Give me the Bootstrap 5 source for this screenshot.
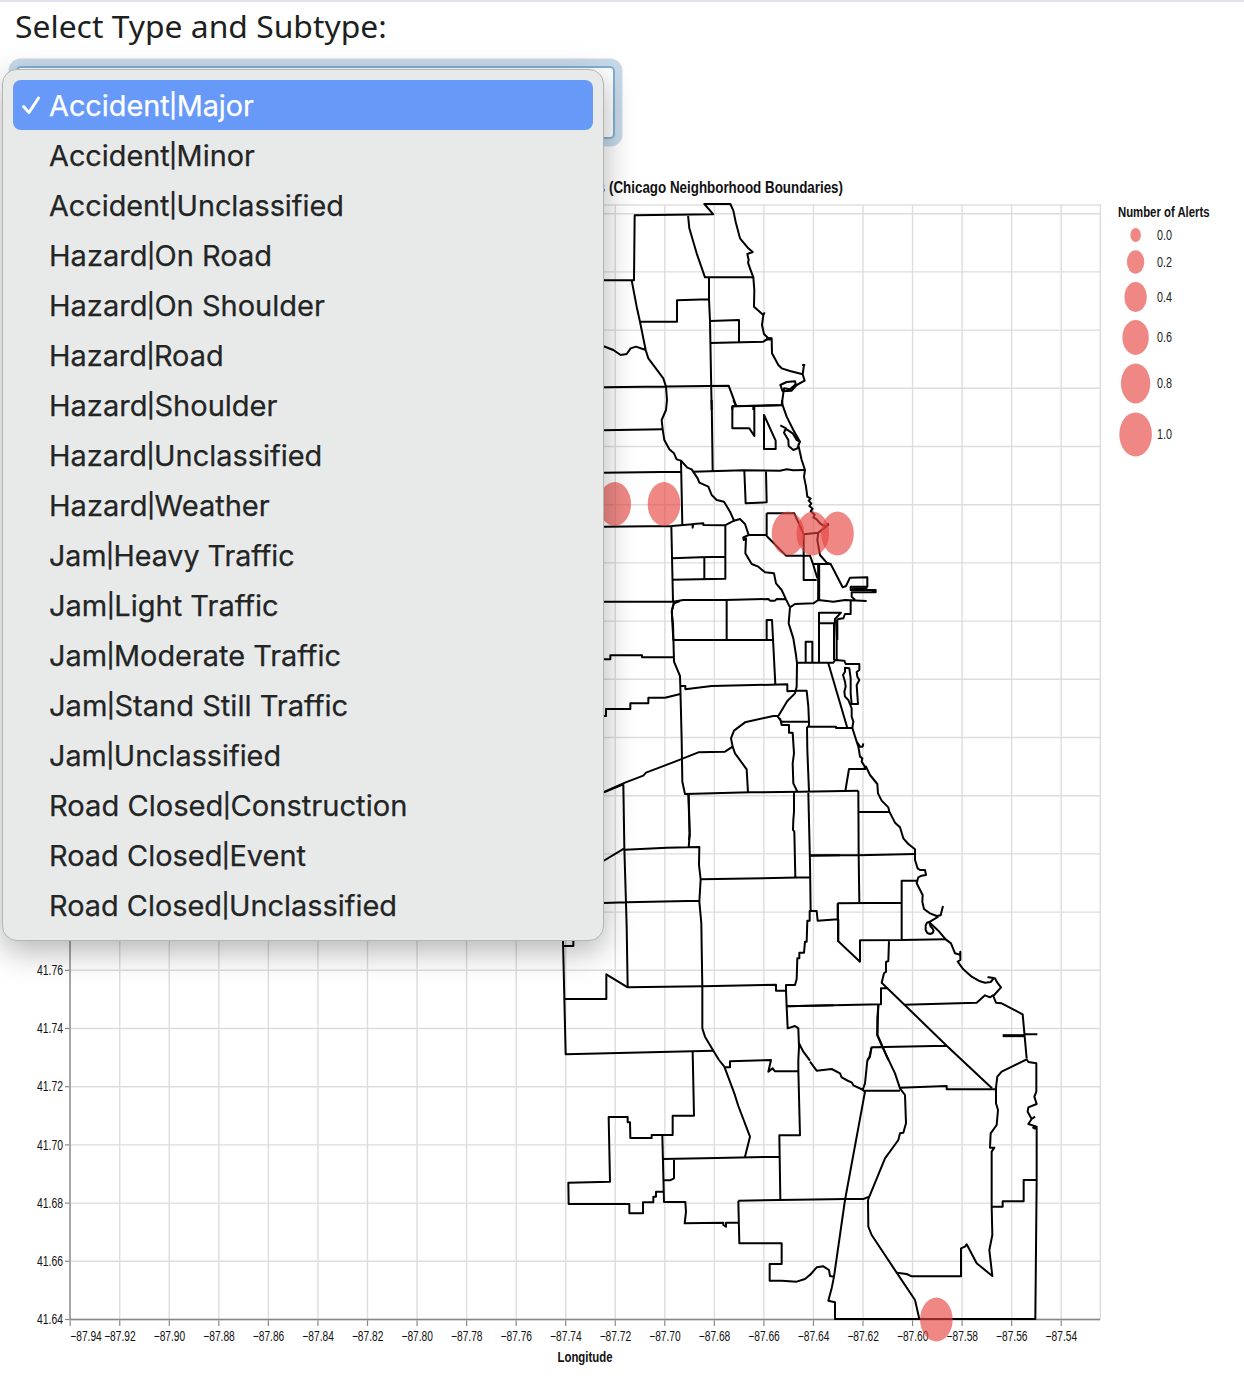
<!DOCTYPE html>
<html lang="en">
<head>
<meta charset="utf-8">
<meta name="viewport" content="width=device-width, initial-scale=1">
<title>Alerts by type and subtype</title>
<link href="https://cdn.jsdelivr.net/npm/bootstrap@5.3.0/dist/css/bootstrap.min.css" rel="stylesheet">
<style>
body{font-family:"Noto Sans","Open Sans",sans-serif;color:#1d1f21;background:#fff;overflow:hidden}
.page-top{height:150px;border-top:2px solid #dfe1ee;padding:2px 15px 0 15px}
.type-label{font-size:31.5px;line-height:44px;height:44px;white-space:nowrap}
.type-box{width:599px;height:73px;margin:18px 0 0 1px;border:2px solid #80b1d4;border-radius:5px;box-shadow:0 0 0 7.5px #c8d9e9;background:#fff}
.type-menu{left:2px;top:69px;width:602px;height:872px;padding:10px;border:1px solid #b4b6b6;border-radius:15px;background:#e8eaea;box-shadow:0 10px 32px rgba(0,0,0,.3);font-family:Inter,sans-serif;z-index:5}
.type-item{height:50px;line-height:52px;padding-left:36px;font-size:28.4px;border-radius:8px;color:#232525;white-space:nowrap;position:relative;-webkit-text-stroke:.25px currentColor}
.type-item.chosen{background:#6799f8;color:#fff}
.tick{position:absolute;left:8px;top:14px}
.item-text{display:inline-block;transform-origin:0 50%}
.bar-sep{display:inline-block;transform:scaleY(.84);margin:0 -1.3px;line-height:1}
.plot{display:block;font-family:"Liberation Sans",Arial,sans-serif}
.bounds path{fill:none;stroke:#000;stroke-width:2;vector-effect:non-scaling-stroke;stroke-linejoin:round}
.bounds .heavy{stroke-width:3}
</style>
</head>
<body>
<main class="position-relative">
<section class="page-top">
  <div class="type-label"><span id="lab" class="item-text">Select Type and Subtype:</span></div>
  <div class="type-box"></div>
</section>
<div class="type-menu position-absolute d-flex flex-column" id="menu"></div>
<svg class="plot" width="1244" height="1229" viewBox="0 150 1244 1229">
  <g id="grid"></g>
  <g class="bounds">
    <g transform="translate(600 170) scale(.33333)">
      <path d="M9 331H102L104 136 340 133 313 102H391L400 122 408 160 420 205 445 235 458 246 442 252 446 270 444 278 450 295 460 322H315L290 250 268 175 264 135"/>
      <path d="M460 322L463 360 462 410 490 435 494 427M490 435L486 465 492 492 505 505H515L516 550 535 585 545 595 570 603 608 613 612 585M608 613L614 632 590 645 575 662 548 664 541 645 560 636 585 634 587 643 570 658 552 655 545 705 397 709V720M460 708V720"/>
      <path d="M327 322V388L231 391V455H120M95 331L110 410 120 455 137 540 145 565 190 625 198 650 201 690M9 528L40 540 62 555 80 552 92 535 108 530 137 540M327 388L330 453 335 720M330 453L417 450V517M330 519L490 515 505 505M9 652L386 647 408 706"/>
      <path class="heavy" d="M611 582V588M498 507H515"/>
    </g>
    <g transform="translate(600 400) scale(.33333)">
      <path d="M201 0L198 30 185 60 188 88 193 120 208 148 222 160 230 178 243 182 262 203 275 208 293 235 298 248 325 260 335 285 350 300 372 305 390 335 402 362 420 357 435 372 446 405 430 412 431 420 438 415 436 460 455 492 475 500 495 517 522 520 528 550 545 570 558 598 570 622"/>
      <path d="M9 91L188 88M335 0L338 213M9 218L243 215M243 182L247 375M278 215L430 211 540 212 560 208 580 211 615 210M400 0L408 18M397 18V85H448L463 108V18M397 19L548 16 546 0M492 45V147H527V122ZM433 213L437 310 500 307 498 213"/>
      <path d="M548 16L560 50 580 90 600 125 595 135 605 180 615 210 612 230 618 260 622 290 632 296 626 302 634 310 628 318 638 326 632 334 644 344 640 352 650 358 660 370 672 378 685 375 682 369M541 76L558 85 552 98 565 120 566 138 580 150 592 145 600 125 590 120 578 100 560 88 552 92"/>
      <path d="M9 380L215 378 278 373V383L280 372 310 370V375L375 376 402 362M214 378L219 605M217 475L300 472 376 470M313 473V538M376 376V536L218 539M9 605H219L250 600 375 600 505 597 510 602 525 602 530 597 558 598M380 598V720M240 603L222 610 216 630 216 650 220 720H519M500 717V660H516L519 717"/>
      <path d="M500 340H583L611 403V540H650M500 340V408L558 467H630L640 495 652 535M446 405H500M611 403L655 398 685 375M655 398L652 420 660 465 680 488 692 492 728 562 738 558 750 533 802 532V560H752V570H827V577H755V590L765 600M570 622L585 612 640 610 655 600 700 605 735 600 800 603M640 492H690M752 604V642H735L730 655 715 657 705 668 712 665V720M657 720V638H723L705 657 702 720M657 670H702"/>
      <path class="heavy" d="M656 494V600M815 572H827"/>
      <path d="M755 565H802"/>
    </g>
    <g transform="translate(600 600) scale(.33333)">
      <path d="M222 5L215 35 219 70 222 185 240 228 241 260 245 420 247 545 255 582 450 577 600 575 775 572M9 178H31V166H126V172H220M519 117L526 253M241 258H256V268L335 258 562 253V274L588 272M570 22L566 70 580 115 588 165 591 190 590 260 585 280 562 303 535 348 520 348 435 367 402 392 393 415 398 440 405 460 440 508 444 577"/>
      <path d="M9 348H18V327H91V310H145V293H195L241 282M9 577L75 548 130 527 138 518 225 485 295 457 375 455 398 440M70 550V552M265 582L269 700 267 720M588 272H620L625 320 627 365V380M627 365H545L533 350M540 355L545 375H567V398H578L582 460 578 490 580 550 592 575M621 380L622 450 627 575"/>
      <path d="M621 380H708V384H757M685 190L742 384M591 188H700L705 180 733 182 737 192 778 192 778 210 770 216 772 230 778 240 770 255 774 312H755L752 280 752 235 748 205 735 203 735 215 729 225 735 245 737 260 733 275 735 290 745 300 755 325 755 350 760 365 757 384M617 188V125H637V188M657 188V38M710 60V180M702 70V180"/>
      <path d="M757 384L770 425 780 440 788 440 790 430M770 425L775 440 780 470 787 475 785 485 798 505M798 507H747L736 573M582 577V597"/>
    </g>
    <g transform="translate(550 780) scale(.33333)">
      <path d="M160 38L220 13M220 13L223 205 160 243M404 42H416L419 165 416 202M225 209L350 203 448 201 447 255 452 298 448 365 454 430 455 500 457 620 457 745 465 770 490 812 507 840M223 205L228 370 230 440 233 622M160 369L230 367 450 362M452 298L780 292M732 38V95L730 120 729 150 733 155 736 292M775 38L780 250 782 393M780 227L870 226"/>
      <path d="M39 480L43 655 47 823 490 812M39 498H70V480M43 657H169V583L233 622 457 619 678 614V632H708V615H735L740 597 742 535H748V518H762L765 485H770L772 422H779V393H800L803 422 863 418V370M865 418V485M708 632L710 680 713 745 735 738 745 745 747 800 745 840M708 679L850 676M747 790L760 815 780 842"/>
    </g>
    <g transform="translate(780 760) scale(.33333)">
      <path d="M252 25L258 20 270 45 292 72 294 100 305 122 325 142 328 155 345 188 360 202 370 235 385 252 405 268 405 300 413 325 420 330 435 330 438 345 425 347 415 352 410 370 428 405 427 425 432 447 450 460 470 468 482 466 489 438"/>
      <path d="M475 470L450 485 441 488 437 497 437 510 442 519 450 522 458 519 461 512 457 505 452 500 448 487 475 512 497 538 513 550 525 580 540 584 541 575 541 600 533 605 550 628 575 650 600 664 615 668 632 666 642 654 625 652 645 655 652 668 663 682 640 708 648 728 665 730 728 763 740 895"/>
      <path d="M235 92L236 286 238 428M233 156H328M90 286H235L405 282M174 430L365 428V540M365 428V362H412M174 428V543L240 605V541L365 540 497 538M327 541L325 603 318 606V635L312 640 305 668 500 857 636 985M320 685H303V733L20 739M372 734L590 728 615 706 630 712 640 705M295 735L292 825 325 900M262 900L268 892 275 862 500 857M735 823H772"/>
      <path class="heavy" d="M668 827H735"/>
    </g>
    <g transform="translate(550 1030) scale(.33333)">
      <path d="M428 65L432 257H368V315H305V324H241L240 277H233V261H176L180 455 55 458 56 522H238V550H279V517H310V500H318V485H340M337 317L342 516H406L408 545 404 580 520 578 520 585 528 590V578H565M565 512L840 508M565 512L568 640H695V702H659V752H695L740 755 765 747 782 733"/>
      <path d="M339 387L500 384 690 380M372 387V445L360 451H342M507 90L523 110 553 190 565 228 600 320 585 380M523 112H540V94L663 90 655 125 668 115 675 124H745M745 90V120L750 316H688L691 508"/>
    </g>
    <g transform="translate(810 1000) scale(.33333)">
      <path d="M0 185L20 212 65 207 90 220 95 232 115 243 125 247 130 256 160 270M184 143L180 170 172 182 165 250 158 270 165 275 105 600 72 830M160 272H270M205 15L202 55V105L217 140 255 220 270 265 285 285 288 370 280 398 270 400 265 420 225 475 178 590 174 600 175 680 185 705 260 818 315 900 328 957"/>
      <path d="M270 263L410 258V268H558M60 598L105 597 160 597 178 590M260 818L290 822 305 829H453V745L465 740 470 733 500 790 547 828 538 750 547 705 545 620V455L553 443H540L542 400 560 375 564 330 558 310V262L562 230 575 215 650 178 655 186 679 190V275L673 290 680 312 655 322 653 335 665 357 675 350M665 357L655 372 680 380V540L676 957H75V907L55 902 65 865 72 830 60 828 57 810 40 799 20 802 0 825M545 620H578V604H641V540H679"/>
      <path class="heavy" d="M668 380L678 386"/>
    </g>
    <path d="M433 940H460"/>
  </g>
  <g fill="rgb(230,66,62)" fill-opacity=".63">
    <ellipse cx="614.7" cy="504" rx="16.3" ry="22"/><ellipse cx="664" cy="504" rx="16.3" ry="22"/>
    <ellipse cx="788" cy="533.5" rx="16.3" ry="22"/><ellipse cx="812.8" cy="533.5" rx="16.3" ry="22"/><ellipse cx="837.5" cy="533.5" rx="16.3" ry="22"/>
    <ellipse cx="936.4" cy="1319.5" rx="16.3" ry="22"/>
  </g>
  <g font-weight="bold" font-size="17" fill="#111">
    <text x="598" y="192.5" textLength="7" lengthAdjust="spacingAndGlyphs">s</text>
    <text x="609" y="192.5" textLength="234" lengthAdjust="spacingAndGlyphs">(Chicago Neighborhood Boundaries)</text>
    <text x="1118" y="217" font-size="14" textLength="91.5" lengthAdjust="spacingAndGlyphs">Number of Alerts</text>
    <text x="557.5" y="1362" font-size="14.5" textLength="55" lengthAdjust="spacingAndGlyphs">Longitude</text>
  </g>
  <g id="legend"></g>
</svg>
</main>
<script src="https://cdn.jsdelivr.net/npm/bootstrap@5.3.0/dist/js/bootstrap.bundle.min.js"></script>
<script>
// each option with its drawn width
const options=[["Accident|Major",204],["Accident|Minor",205],["Accident|Unclassified",294],["Hazard|On Road",222],["Hazard|On Shoulder",275],["Hazard|Road",174],["Hazard|Shoulder",227],["Hazard|Unclassified",272],["Hazard|Weather",220],["Jam|Heavy Traffic",245],["Jam|Light Traffic",229],["Jam|Moderate Traffic",291],["Jam|Stand Still Traffic",298],["Jam|Unclassified",231],["Road Closed|Construction",357],["Road Closed|Event",256],["Road Closed|Unclassified",347]];
document.getElementById("menu").innerHTML=options.map(([t],i)=>`<div class="type-item${i?"":" chosen"}">${i?"":'<svg class="tick" width="20" height="24" viewBox="0 0 20 24"><path d="M2.5 12.5 8 18.5 17.5 4" fill="none" stroke="#fff" stroke-width="3" stroke-linecap="round" stroke-linejoin="round"/></svg>'}<span class="item-text">${t.replace("|",'<span class="bar-sep">|</span>')}</span></div>`).join("");
const fit=(el,w)=>{el.style.transform=`scaleX(${w/el.offsetWidth})`};
document.querySelectorAll("#menu .item-text").forEach((el,i)=>fit(el,options[i][1]+1));
fit(document.getElementById("lab"),372);

let g="";
const x0=70,y0=1319.5,dx=49.55,dy=58.2;
for(let i=0;i<21;i++){
  const x=x0+i*dx+.2;
  g+=`<path d="M${x} 205V1319" stroke="#ddd" stroke-width="1.4"/><path d="M${x} 1320V1326" stroke="#888" stroke-width="1.2"/>`;
}
for(let i=0;i<20;i++){
  const y=y0-i*dy;
  g+=`<path d="M70 ${y}H1100" stroke="#ddd" stroke-width="1.4"/><path d="M65 ${y}H70" stroke="#888" stroke-width="1.2"/>`;
}
g+='<rect x="70" y="205" width="1030.3" height="1114.5" fill="none" stroke="#ddd" stroke-width="1.4"/><path d="M70 205V1319.5H1100" fill="none" stroke="#888" stroke-width="1.3"/><g font-size="14" fill="#111">';
for(let i=0;i<21;i++){
  const x=i?x0+i*dx+.3:86;
  g+=`<text x="${x-15.7}" y="1341" textLength="31.5" lengthAdjust="spacingAndGlyphs">−${(87.94-i*.02).toFixed(2)}</text>`;
}
for(let i=0;i<7;i++)g+=`<text x="37" y="${y0-i*dy+4.7}" textLength="26" lengthAdjust="spacingAndGlyphs">${(41.64+i*.02).toFixed(2)}</text>`;
document.getElementById("grid").innerHTML=g+"</g>";
document.getElementById("legend").innerHTML=[[0,235,5.3,7],[.2,262,8.7,11.7],[.4,297,11.2,15],[.6,337.4,13.2,17.5],[.8,383.4,14.7,20],[1,434.4,16.3,22]].map(([v,y,rx,ry])=>`<ellipse cx="1135.6" cy="${y}" rx="${rx}" ry="${ry}" fill="#ef8885"/><text x="1157" y="${y+4.5}" font-size="14" fill="#222" textLength="15" lengthAdjust="spacingAndGlyphs">${v.toFixed(1)}</text>`).join("");
</script>
</body>
</html>
